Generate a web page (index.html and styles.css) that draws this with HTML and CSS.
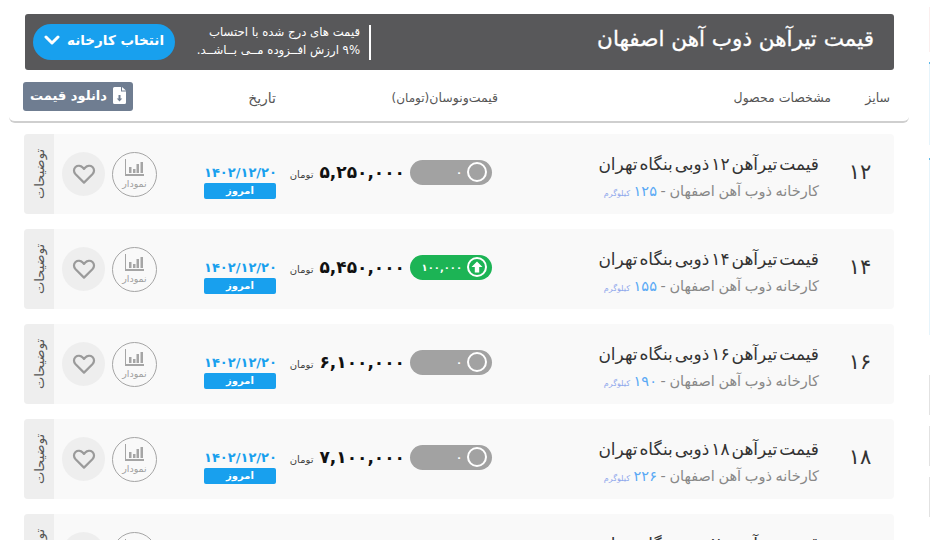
FILE: index.html
```html
<!DOCTYPE html>
<html lang="fa">
<head>
<meta charset="utf-8">
<title>قیمت تیرآهن ذوب آهن اصفهان</title>
<link rel="stylesheet" href="styles.css">
</head>
<body>
<svg class="defs" width="0" height="0" aria-hidden="true">
  <symbol id="heart" viewBox="0 0 24 24"><path d="M12 20.6 3.6 12.3C1.4 10 1.5 6.8 3.5 5 5.6 3.200 8.800 3.500 10.700 5.500L12 6.900l1.300-1.400C15.200 3.500 18.400 3.200 20.500 5c2 1.800 2.100 5 -.1 7.300z" fill="none" stroke="#9a9a9a" stroke-width="2.200" stroke-linejoin="round"/></symbol>
  <symbol id="chart" viewBox="0 0 20 18"><path d="M1 0v15h18v2H0V0z M4 8h2.500v6H4z M8 10h2.500v4H8z M11.500 5H14v9h-2.500z M15.500 3H18v11h-2.500z" fill="#a5a5a5" fill-rule="evenodd"/></symbol>
</svg>
<main class="page">
  <header class="banner">
    <h1 class="banner-title">قیمت تیرآهن ذوب آهن اصفهان</h1>
    <div class="banner-tools">
      <p class="banner-note"><span class="note-text">قیمت های درج شده با احتساب<br>۹% ارزش افــزوده مــی بــاشــد.</span></p>
      <button class="factory-btn">انتخاب کارخانه
        <svg width="16" height="10" viewBox="0 0 16 10"><path d="M2 2l6 6 6-6" fill="none" stroke="#fff" stroke-width="3" stroke-linecap="round" stroke-linejoin="round"/></svg>
      </button>
    </div>
  </header>

  <div class="columns">
    <span class="col col-size">سایز</span>
    <span class="col col-spec">مشخصات محصول</span>
    <span class="col col-price">قیمت‌ونوسان<small>(تومان)</small></span>
    <span class="col col-date">تاریخ</span>
    <button class="download-btn">
      <svg width="13" height="17" viewBox="0 0 13 17"><path d="M0 1.500A1.500 1.500 0 0 1 1.500 0H8v4.500h5V15.500A1.500 1.500 0 0 1 11.500 17h-10A1.500 1.500 0 0 1 0 15.500z M9 0l4 3.500H9z M5.500 8v3.500H3.700L6.500 14.500l2.800-3H7.500V8z" fill="#fff" fill-rule="evenodd"/></svg>
      <span>دانلود قیمت</span>
    </button>
  </div>

  <section class="rows">
    <article class="row">
      <div class="size">۱۲</div>
      <div class="product"><div class="name">قیمت تیرآهن ۱۲ ذوبی بنگاه تهران</div><div class="factory">کارخانه ذوب آهن اصفهان - <b>۱۲۵</b> <small>کیلوگرم</small></div></div>
      <div class="pill"><span class="ring"></span><span>۰</span></div>
      <div class="price"><span class="amount">۵,۲۵۰,۰۰۰</span><small>تومان</small></div>
      <div class="date"><span class="day">۱۴۰۲/۱۲/۲۰</span><span class="today">امروز</span></div>
      <div class="chart"><svg width="20" height="18"><use href="#chart"/></svg><span>نمودار</span></div>
      <div class="fav"><svg width="24" height="24"><use href="#heart"/></svg></div>
      <div class="tab"><span>توضیحات</span></div>
    </article>
    <article class="row">
      <div class="size">۱۴</div>
      <div class="product"><div class="name">قیمت تیرآهن ۱۴ ذوبی بنگاه تهران</div><div class="factory">کارخانه ذوب آهن اصفهان - <b>۱۵۵</b> <small>کیلوگرم</small></div></div>
      <div class="pill up"><span class="ring"><svg width="12" height="12" viewBox="0 0 12 12"><path d="M6 .5 11.500 6H8.200v5.500H3.800V6H.5z" fill="#fff"/></svg></span><span>۱۰۰,۰۰۰</span></div>
      <div class="price"><span class="amount">۵,۴۵۰,۰۰۰</span><small>تومان</small></div>
      <div class="date"><span class="day">۱۴۰۲/۱۲/۲۰</span><span class="today">امروز</span></div>
      <div class="chart"><svg width="20" height="18"><use href="#chart"/></svg><span>نمودار</span></div>
      <div class="fav"><svg width="24" height="24"><use href="#heart"/></svg></div>
      <div class="tab"><span>توضیحات</span></div>
    </article>
    <article class="row">
      <div class="size">۱۶</div>
      <div class="product"><div class="name">قیمت تیرآهن ۱۶ ذوبی بنگاه تهران</div><div class="factory">کارخانه ذوب آهن اصفهان - <b>۱۹۰</b> <small>کیلوگرم</small></div></div>
      <div class="pill"><span class="ring"></span><span>۰</span></div>
      <div class="price"><span class="amount">۶,۱۰۰,۰۰۰</span><small>تومان</small></div>
      <div class="date"><span class="day">۱۴۰۲/۱۲/۲۰</span><span class="today">امروز</span></div>
      <div class="chart"><svg width="20" height="18"><use href="#chart"/></svg><span>نمودار</span></div>
      <div class="fav"><svg width="24" height="24"><use href="#heart"/></svg></div>
      <div class="tab"><span>توضیحات</span></div>
    </article>
    <article class="row">
      <div class="size">۱۸</div>
      <div class="product"><div class="name">قیمت تیرآهن ۱۸ ذوبی بنگاه تهران</div><div class="factory">کارخانه ذوب آهن اصفهان - <b>۲۲۶</b> <small>کیلوگرم</small></div></div>
      <div class="pill"><span class="ring"></span><span>۰</span></div>
      <div class="price"><span class="amount">۷,۱۰۰,۰۰۰</span><small>تومان</small></div>
      <div class="date"><span class="day">۱۴۰۲/۱۲/۲۰</span><span class="today">امروز</span></div>
      <div class="chart"><svg width="20" height="18"><use href="#chart"/></svg><span>نمودار</span></div>
      <div class="fav"><svg width="24" height="24"><use href="#heart"/></svg></div>
      <div class="tab"><span>توضیحات</span></div>
    </article>
    <article class="row">
      <div class="size">۲۰</div>
      <div class="product"><div class="name">قیمت تیرآهن ۲۰ ذوبی بنگاه تهران</div><div class="factory">کارخانه ذوب آهن اصفهان - <b>۲۷۸</b> <small>کیلوگرم</small></div></div>
      <div class="pill"><span class="ring"></span><span>۰</span></div>
      <div class="price"><span class="amount">۸,۱۰۰,۰۰۰</span><small>تومان</small></div>
      <div class="date"><span class="day">۱۴۰۲/۱۲/۲۰</span><span class="today">امروز</span></div>
      <div class="chart"><svg width="20" height="18"><use href="#chart"/></svg><span>نمودار</span></div>
      <div class="fav"><svg width="24" height="24"><use href="#heart"/></svg></div>
      <div class="tab"><span>توضیحات</span></div>
    </article>
  </section>
</main>
<div class="edge" aria-hidden="true">
  <i class="edge-pink"></i>
  <i class="edge-dot"></i>
  <i class="edge-pale edge-pale-a"></i>
  <i class="edge-dot"></i>
  <i class="edge-pale edge-pale-b"></i>
  <i class="edge-grey edge-grey-first"></i>
  <i class="edge-grey"></i>
  <i class="edge-grey"></i>
</div>
</body>
</html>
```
FILE: styles.css
```css
* { box-sizing: border-box; }
html, body { margin: 0; height: 100%; overflow: hidden; background: #fff; }
body { font-family: "DejaVu Sans", "Noto Sans", sans-serif; color: #333; }
.defs { position: absolute; }
.page { width: 900px; margin-left: 9px; padding-top: 14px; direction: rtl; }

.banner { height: 56px; margin: 0 15px 0 16px; background: #58585a; border-radius: 3px; display: flex; align-items: center; justify-content: space-between; padding: 0 20px 0 8px; color: #fff; }
.banner-title { margin: 0; padding-bottom: 8px; font-size: 21.500px; font-weight: 400; -webkit-text-stroke: .3px #fff; white-space: nowrap; }
.banner-tools { display: flex; align-items: center; }
.banner-note { margin: 0 0 0 23px; padding-right: 9px; width: 173px; height: 35px; border-right: 2px solid #fff; font-size: 11.700px; line-height: 18px; white-space: nowrap; }
.note-text { display: block; margin-top: -2px; }
.factory-btn { width: 142px; height: 36px; border: 0; border-radius: 18px; background: #18a0ee; color: #fff; font: 700 13.500px "DejaVu Sans", sans-serif; display: flex; align-items: center; justify-content: center; gap: 7px; padding: 0 0 5px; }

.columns { height: 53px; border-bottom: 2px solid #cfcfcf; border-radius: 0 0 6px 6px; display: flex; align-items: center; padding-top: 4px; font-size: 12.500px; color: #555; }
.col { white-space: nowrap; }
.col small { font-size: 12px; }
.col-size { margin-right: 19px; width: 59px; }
.col-spec { width: 333px; }
.col-price { width: 222px; }
.col-date { width: 143px; font-size: 14px; }
.download-btn { width: 110px; height: 29px; margin-top: -3px; border: 0; border-radius: 3px; background: #6f7d91; color: #fff; font: 700 13px "DejaVu Sans", sans-serif; display: flex; align-items: center; justify-content: center; gap: 6px; padding: 0 0 2px; white-space: nowrap; }

.rows { margin: 11px 15px 0; display: flex; flex-direction: column; gap: 15px; }
.row { flex: none; height: 80px; background: #f9f9f9; border-radius: 4px; display: flex; align-items: center; }
.size { width: 68px; padding-bottom: 5px; text-align: center; font-size: 21px; color: #333; }
.product { width: 334px; padding: 9px 7px 0 0; }
.name { font-size: 17px; word-spacing: -3.500px; color: #333; line-height: 20px; margin-bottom: 7px; white-space: nowrap; }
.factory { font-size: 14.500px; word-spacing: -1px; color: #888; line-height: 20px; white-space: nowrap; }
.factory b { font-weight: 400; color: #5aa9f5; }
.factory small { font-size: 8px; color: #8fa8ec; }
.pill { width: 82px; height: 25px; margin-top: -4px; border-radius: 13px; background: #a2a2a2; color: #fff; display: flex; align-items: center; gap: 5px; padding: 0 5px; font-size: 10px; font-weight: 700; }
.pill.up { background: #1cb455; }
.ring { width: 20px; height: 20px; border: 2px solid #fff; border-radius: 50%; display: flex; align-items: center; justify-content: center; flex: none; }
.price { width: 134px; padding-right: 5px; display: flex; align-items: center; gap: 6px; white-space: nowrap; }
.amount { font-size: 17px; font-weight: 700; color: #111; direction: ltr; unicode-bidi: isolate; padding-bottom: 4px; }
.price small { font-size: 10px; color: #444; }
.date { width: 72px; display: flex; flex-direction: column; gap: 2px; margin-top: 14px; }
.day { font-size: 13px; font-weight: 700; color: #18a0ee; text-align: center; line-height: 17px; direction: ltr; unicode-bidi: isolate; white-space: nowrap; }
.today { height: 16px; border-radius: 2px; background: #18a0ee; color: #fff; font-size: 10px; font-weight: 700; text-align: center; line-height: 15px; }
.chart { width: 45px; height: 45px; margin: 0 47px 0 0; border: 1px solid #a5a5a5; border-radius: 50%; display: flex; flex-direction: column; align-items: center; justify-content: center; gap: 1px; color: #a0a0a0; font-size: 9.500px; line-height: 11px; }
.fav { width: 43px; height: 44px; margin-right: 7px; border-radius: 50%; background: #eee; display: flex; align-items: center; justify-content: center; }
.tab { width: 30px; height: 80px; margin-right: 8px; background: #eee; border-radius: 4px 0 0 4px; display: flex; align-items: center; justify-content: center; }
.tab span { writing-mode: vertical-rl; transform: rotate(180deg); font-size: 13px; color: #555; }

.edge { position: absolute; top: 7px; right: 0; width: 1px; display: flex; flex-direction: column; }
.edge i { display: block; }
.edge-pink { height: 45px; margin-bottom: 10px; background: #fbeeee; }
.edge-dot { height: 2px; background: #5cb8e8; }
.edge-pale { background: #e6f4fb; }
.edge-pale-a { height: 81px; margin-bottom: 13px; }
.edge-pale-b { height: 175px; }
.edge-grey { height: 40px; margin-top: 11px; background: #e2e2e2; }
.edge-grey-first { margin-top: 40px; }
```
